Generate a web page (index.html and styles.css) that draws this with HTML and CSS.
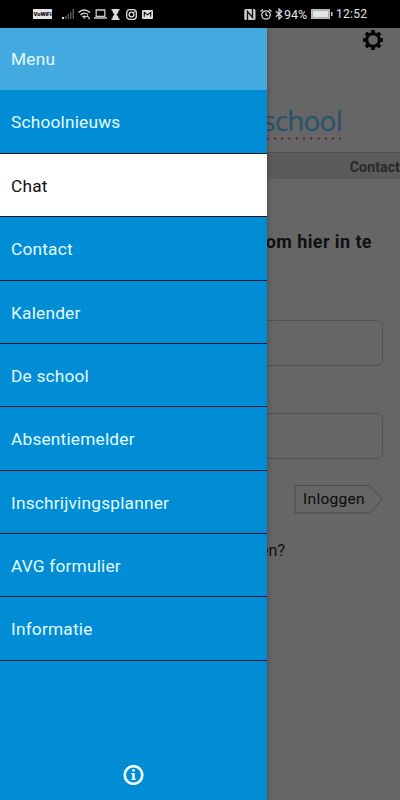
FILE: index.html
```html
<!DOCTYPE html>
<html lang="nl">

<head>
    <meta charset="UTF-8">
    <meta name="viewport" content="width=device-width, initial-scale=1.0">
    <title>School app</title>
    <link rel="stylesheet" href="styles.css">
</head>

<body>
    <!-- Status bar -->
    <header class="status-bar">
        <div class="status-left">
            <span class="vowifi">VoWiFi</span>
            <svg class="signal" width="12" height="10" viewBox="0 0 12 10" fill="#555">
                <path fill="#ddd" d="M0 8h2v2H0z"/>
                <path d="M3 7h1.500v3H3zM5.500 5H7v5H5.500zM8 3h1.500v7H8zM10.500 0H12v10h-1.500z"/>
            </svg>
            <svg class="wifi" width="13" height="11" viewBox="0 0 13 11" fill="none" stroke="#ddd" stroke-width="1.400">
                <path d="M.5 3.500Q6 -1.500 12 3.500M2.500 6Q6 2.500 10 5.500M4.500 8Q6 6.500 8 8"/>
                <path fill="#ddd" stroke="none" d="M5 8.500h2.500L6.300 10zM8 8l1.500-2L11 8zM9.500 8.500h3L11 10.500z"/>
            </svg>
            <svg class="laptop" width="13" height="10" viewBox="0 0 13 10" fill="none" stroke="#ccc" stroke-width="1.300">
                <path d="M2.200 1h8.600v6.300H2.200zM0 9h13"/>
            </svg>
            <svg class="hourglass" width="9" height="11" viewBox="0 0 9 11" fill="#ddd">
                <path d="M.5 0h8v1.500h-.8Q7.500 4 5.500 5.500 7.500 7 7.700 9.500h.8V11h-8V9.500h.8Q1.500 7 3.500 5.500 1.500 4 1.300 1.500H.5z"/>
            </svg>
            <svg class="instagram" width="11" height="11" viewBox="0 0 11 11" fill="none" stroke="#ddd" stroke-width="1.300">
                <rect x=".7" y=".7" width="9.600" height="9.600" rx="3"/>
                <circle cx="5.500" cy="5.500" r="2.400"/>
                <path d="M7.800 2.600h1"/>
            </svg>
            <svg class="mail" width="11" height="9" viewBox="0 0 11 9">
                <rect width="11" height="9" rx="1" fill="#ddd"/>
                <path d="M2.300 6.800V2.300l3.200 2.600 3.200-2.600v4.500" fill="none" stroke="#111" stroke-width="1.100"/>
            </svg>
        </div>
        <div class="status-right">
            <svg class="nfc" width="12" height="11" viewBox="0 0 12 11">
                <rect x=".3" width="11.200" height="11" rx="1.500" fill="#ccc"/>
                <path d="M3.500 11V2.500l5 6V0" fill="none" stroke="#111" stroke-width="1.300"/>
            </svg>
            <svg class="alarm" width="12" height="11" viewBox="0 0 12 11" fill="none" stroke="#ddd" stroke-width="1.300">
                <circle cx="6" cy="6" r="4.200"/>
                <path d="M6 3.500V6l2 1M.5 2.500L3 .5M9 .5l2.500 2"/>
            </svg>
            <svg class="bluetooth" width="8" height="12" viewBox="0 0 8 12" fill="none" stroke="#ddd" stroke-width="1.200">
                <path d="M.8 3.200L6.800 8.500 4 11V1l2.800 2.500-6 5.300"/>
            </svg>
            <span class="percent">94%</span>
            <svg class="battery" width="22" height="10" viewBox="0 0 22 10">
                <rect x=".5" y=".5" width="18" height="9" fill="#e4e4e4" stroke="#bbb"/>
                <path d="M1.500 1.500h16v7h-16z" fill="none" stroke="#777" stroke-width=".5"/>
                <path d="M20 3h1.500v4H20z" fill="#ccc"/>
            </svg>
            <span class="time">12:52</span>
        </div>
    </header>

    <div class="app">
        <!-- Login page behind the menu -->
        <main class="page">
            <div class="toolbar">
                <svg width="20" height="20" viewBox="0 0 20 20">
                    <g fill="none" stroke="#050505">
                        <circle cx="10" cy="10" r="6.300" stroke-width="3"/>
                        <path stroke-width="3.800" d="M10 0v3.500M10 16.500V20M0 10h3.500M16.500 10H20M2.900 2.900l2.500 2.500M14.600 14.600l2.500 2.500M2.900 17.100l2.500-2.500M14.600 5.400l2.500-2.500"/>
                    </g>
                </svg>
            </div>
            <div class="logo">
                <div class="logo-text">school</div>
                <svg width="83" height="3" viewBox="0 0 83 3" fill="none" stroke="#681c2c" stroke-width="2">
                    <path d="M.5 1.500h81.500" stroke-dasharray="2 5.250"/>
                </svg>
            </div>
            <nav class="page-nav">Contact</nav>
            <form class="login">
                <h1>om hier in te</h1>
                <input class="field" type="text" aria-label="Gebruikersnaam">
                <input class="field" type="password" aria-label="Wachtwoord">
                <button class="login-button" type="button">
                    <svg width="90" height="29" viewBox="0 0 90 29" fill="none" stroke="#4b4b4b">
                        <path d="M2 .5h74.500L89.500 14.300 76.500 28H2z"/>
                    </svg>
                    <span>Inloggen</span>
                </button>
                <p class="forgot">en?</p>
            </form>
        </main>

        <!-- Side menu -->
        <aside class="menu">
            <div class="menu-title">Menu</div>
            <ul class="menu-list">
                <li>Schoolnieuws</li>
                <li class="active">Chat</li>
                <li>Contact</li>
                <li>Kalender</li>
                <li>De school</li>
                <li>Absentiemelder</li>
                <li>Inschrijvingsplanner</li>
                <li>AVG formulier</li>
                <li>Informatie</li>
            </ul>
            <div class="menu-footer">
                <svg width="21" height="20" viewBox="0 0 21 20">
                    <circle cx="10.500" cy="10" r="8.800" fill="none" stroke="#efffff" stroke-width="2.700"/>
                    <path fill="#efffff" d="M9.200 4.200h2.600v2.300H9.200zM8.200 8h3.600v5.800h1V15H8.200v-1.200h1V9.200h-1z"/>
                </svg>
            </div>
        </aside>
    </div>
</body>

</html>
```

FILE: styles.css
```css
* {
    box-sizing: border-box;
}

body {
    margin: 0;
    height: 800px;
    overflow: hidden;
    font-family: Roboto, "Liberation Sans", sans-serif;
    background-color: #666;
}

svg {
    display: block;
    flex-shrink: 0;
}

/* Status bar */
.status-bar {
    height: 28px;
    padding: 0 33px;
    display: flex;
    justify-content: space-between;
    background-color: #000;
    color: #e4e4e4;
}

.status-left,
.status-right {
    display: flex;
    align-items: center;
}

.vowifi {
    width: 19px;
    height: 10px;
    margin-right: 10px;
    background-color: #e4e4e4;
    color: #111;
    font-size: 6px;
    font-weight: 900;
    line-height: 10px;
    text-align: center;
    letter-spacing: -0.2px;
}

.signal,
.laptop {
    margin-right: 4px;
}

.wifi {
    margin-right: 3px;
}

.hourglass {
    margin-right: 6px;
}

.instagram {
    margin-right: 5px;
}

.nfc {
    margin-right: 4px;
}

.alarm {
    margin-right: 3px;
}

.bluetooth {
    margin-right: 1px;
}

.percent,
.time {
    font-size: 12px;
    letter-spacing: 0.1px;
}

.percent {
    width: 27px;
    font-size: 12.5px;
    letter-spacing: 0;
}

.time {
    width: 31px;
    margin-left: 3px;
    letter-spacing: 0.3px;
}

/* Login page */
.app {
    position: relative;
    height: 772px;
}

.page {
    height: 100%;
    overflow: hidden;
    color: #101010;
}

.toolbar {
    height: 74px;
    padding: 2px 17px 0;
    display: flex;
    justify-content: flex-end;
}

.logo {
    height: 50px;
    padding-right: 58px;
    display: flex;
    flex-direction: column;
    align-items: flex-end;
}

.logo-text {
    height: 35px;
    color: #29526b;
    font-family: "Noto Sans", sans-serif;
    font-size: 28px;
    line-height: 37px;
    letter-spacing: -0.9px;
}

.page-nav {
    height: 27px;
    border-top: 1px solid #505050;
    background-color: #5b5b5b;
    color: #292929;
    font-size: 14px;
    font-weight: bold;
    letter-spacing: 0.15px;
    line-height: 28px;
    text-align: right;
}

.login {
    padding: 52px 17px 0;
    display: flex;
    flex-direction: column;
    align-items: flex-end;
}

.login h1 {
    margin: 0 11px 67px 0;
    font-size: 18px;
    line-height: 22px;
    letter-spacing: 0.4px;
}

.field {
    width: 366px;
    height: 46px;
    margin-bottom: 47px;
    border: 1px solid #525252;
    border-radius: 6px;
    background-color: transparent;
}

.field + .field {
    margin-bottom: 26px;
}

.login-button {
    display: grid;
    padding: 0;
    border: 0;
    background: none;
    color: #0c0c0c;
    font-family: inherit;
    font-size: 15.5px;
    letter-spacing: 0.3px;
    line-height: 28px;
}

.login-button svg,
.login-button span {
    grid-area: 1 / 1;
}

.login-button span {
    padding-right: 8px;
}

.forgot {
    margin: 26px 98px 0 0;
    font-size: 16px;
    line-height: 22px;
}

/* Side menu */
.menu {
    position: absolute;
    top: 0;
    left: 0;
    width: 267px;
    height: 100%;
    display: flex;
    flex-direction: column;
    background-color: #008dd5;
    box-shadow: 0 0 6px rgba(0, 0, 0, 0.3);
    color: #e4fbff;
    font-size: 17.3px;
    letter-spacing: 0.2px;
    clip-path: inset(0 -8px 0 0);
}

.menu-title {
    height: 62.4px;
    padding-left: 11px;
    background-color: #42aae0;
    line-height: 63px;
}

.menu-list {
    margin: 0;
    padding: 0;
    list-style-type: none;
}

.menu-list li {
    height: 63.38px;
    padding-left: 11px;
    border-bottom: 1px solid #071828;
    line-height: 65px;
}

.menu-list .active {
    background-color: #fff;
    color: #111;
}

.menu-footer {
    margin-top: auto;
    padding-bottom: 15px;
    display: flex;
    justify-content: center;
}
```
